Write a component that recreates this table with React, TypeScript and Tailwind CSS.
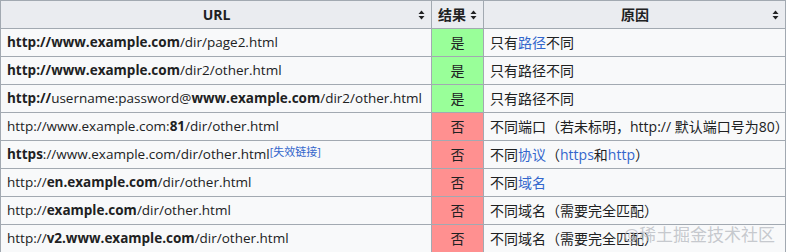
import React from "react"

type Row = {
  id: string
  url: React.ReactNode
  ok: boolean
  reason: React.ReactNode
}

const link = "text-[#3366cc]"

function SortIcon() {
  return (
    <svg width="7" height="10" viewBox="0 0 7 10" className="inline-block shrink-0">
      <path d="M3.5 0.5 L6.5 4 L0.5 4 Z" fill="#202122" />
      <path d="M3.5 9.5 L6.5 6 L0.5 6 Z" fill="#202122" />
    </svg>
  )
}

const rows: Row[] = [
  {
    id: "1",
    url: (<><b>http://www.example.com</b>/dir/page2.html</>),
    ok: true,
    reason: (<>只有<span className={link}>路径</span>不同</>),
  },
  {
    id: "2",
    url: (<><b>http://www.example.com</b>/dir2/other.html</>),
    ok: true,
    reason: "只有路径不同",
  },
  {
    id: "3",
    url: (<><b>http://</b>username:password@<b>www.example.com</b>/dir2/other.html</>),
    ok: true,
    reason: "只有路径不同",
  },
  {
    id: "4",
    url: (<>http://www.example.com:<b>81</b>/dir/other.html</>),
    ok: false,
    reason: "不同端口（若未标明，http:// 默认端口号为80）",
  },
  {
    id: "5",
    url: (
      <>
        <b>https</b>://www.example.com/dir/other.html
        <sup className={`${link} text-[11px] relative -top-[3px]`}>[失效链接]</sup>
      </>
    ),
    ok: false,
    reason: (<>不同<span className={link}>协议</span>（<span className={link}>https</span>和<span className={link}>http</span>）</>),
  },
  {
    id: "6",
    url: (<>http://<b>en.example.com</b>/dir/other.html</>),
    ok: false,
    reason: (<>不同<span className={link}>域名</span></>),
  },
  {
    id: "7",
    url: (<>http://<b>example.com</b>/dir/other.html</>),
    ok: false,
    reason: "不同域名（需要完全匹配）",
  },
  {
    id: "8",
    url: (<>http://<b>v2.www.example.com</b>/dir/other.html</>),
    ok: false,
    reason: "不同域名（需要完全匹配）",
  },
]

export default function App() {
  return (
    <div
      className="relative w-[787px] h-[252px] overflow-hidden bg-white text-[#202122] text-[14px]"
      style={{ fontFamily: '"Open Sans", "Noto Sans CJK SC", sans-serif' }}
    >
      <table className="w-[786px] border-collapse border border-[#a2a9b1] table-fixed">
        <colgroup>
          <col className="w-[431px]" />
          <col className="w-[52px]" />
          <col />
        </colgroup>
        <thead>
          <tr className="bg-[#eaecf0] h-[28px]">
            <th className="border border-[#a2a9b1] px-[6px] font-bold">
              <div className="flex items-center">
                <span className="flex-1 text-center pl-[8px]">URL</span>
                <SortIcon />
              </div>
            </th>
            <th className="border border-[#a2a9b1] px-[6px] font-bold">
              <div className="flex items-center gap-[4px]">
                <span>结果</span>
                <SortIcon />
              </div>
            </th>
            <th className="border border-[#a2a9b1] px-[6px] font-bold">
              <div className="flex items-center">
                <span className="flex-1 text-center pl-[8px]">原因</span>
                <SortIcon />
              </div>
            </th>
          </tr>
        </thead>
        <tbody>
          {rows.map((row) => (
            <tr key={row.id} className="h-[28px] bg-[#f8f9fa]">
              <td className="border border-[#a2a9b1] px-[6px] whitespace-nowrap text-[13.5px]">{row.url}</td>
              <td
                className={`border border-[#a2a9b1] px-[6px] text-center ${
                  row.ok ? "bg-[#99ff99]" : "bg-[#ff9090]"
                }`}
              >
                {row.ok ? "是" : "否"}
              </td>
              <td className="border border-[#a2a9b1] px-[6px] whitespace-nowrap">{row.reason}</td>
            </tr>
          ))}
        </tbody>
      </table>
      <div className="absolute right-[12px] bottom-[5px] text-[17px] text-[#b8bcc2]/80 pointer-events-none">
        @稀土掘金技术社区
      </div>
    </div>
  )
}
